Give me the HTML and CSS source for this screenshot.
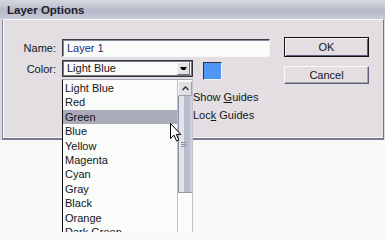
FILE: index.html
```html
<!DOCTYPE html>
<html>
<head>
<meta charset="utf-8">
<title>Layer Options</title>
<link rel="stylesheet" href="styles.css">
</head>
<body>
<div class="screen">
  <div class="window">
    <div class="titlebar">Layer Options</div>
    <div class="panel">
      <div class="form">
        <label class="lbl">Name:</label>
        <div class="textbox">Layer 1</div>
        <label class="lbl">Color:</label>
        <div class="colorrow">
          <div class="select">
            <span class="sel-text">Light Blue</span>
            <span class="drop"><svg width="7" height="3" viewBox="0 0 7 3"><polygon points="0,0 7,0 5,3 2,3" fill="#000"/></svg></span>
          </div>
          <div class="swatch"></div>
        </div>
        <div></div>
        <div class="checks">
          <div class="check"><span class="box"></span><span>Show <u>G</u>uides</span></div>
          <div class="check"><span class="box"></span><span>Loc<u>k</u> Guides</span></div>
        </div>
      </div>
      <div class="buttons">
        <div class="btn default">OK</div>
        <div class="btn">Cancel</div>
      </div>
    </div>
  </div>

  <div class="list">
    <div class="items">
      <div class="item">Light Blue</div>
      <div class="item">Red</div>
      <div class="item sel">Green</div>
      <div class="item">Blue</div>
      <div class="item">Yellow</div>
      <div class="item">Magenta</div>
      <div class="item">Cyan</div>
      <div class="item">Gray</div>
      <div class="item">Black</div>
      <div class="item">Orange</div>
      <div class="item">Dark Green</div>
    </div>
    <div class="scroll">
      <div class="up"><svg width="7" height="5" viewBox="0 0 7 5"><polyline points="0.5,4 3.5,1 6.5,4" fill="none" stroke="#303038" stroke-width="1.3"/></svg></div>
      <div class="thumb"><span class="grip"></span><span class="grip"></span><span class="grip"></span></div>
    </div>
  </div>

  <svg class="cursor" width="13" height="20" viewBox="0 0 13 20">
    <path d="M0.5 0.5 L0.5 15.5 L4 12.2 L6.6 18 L8.8 17 L6.3 11.4 L10.8 11.4 Z" fill="#fff" stroke="#000" stroke-width="1" stroke-linejoin="miter"/>
  </svg>
</div>
</body>
</html>
```

FILE: styles.css
```css
html, body {
  margin: 0;
  padding: 0;
}

body {
  background: #f8faf8;
  font-family: "Liberation Sans", Arial, sans-serif;
  font-size: 11px;
  color: #141418;
  width: 385px;
  height: 232px;
  overflow: hidden;
}

.screen {
  position: relative;
  width: 385px;
  height: 232px;
}

.window {
  height: 140px;
  display: flex;
  flex-direction: column;
  background: #d8d8e0;
}

.titlebar {
  height: 19px;
  box-sizing: border-box;
  padding-left: 7px;
  line-height: 20px;
  font-weight: bold;
  font-size: 11.5px;
  color: #1c1c2c;
  background: linear-gradient(#d6d8e0 0%, #c6c9d4 30%, #b4b8c9 55%, #c8ccd8 100%);
}

.panel {
  height: 121px;
  margin-left: 2px;
  margin-right: 1px;
  box-sizing: border-box;
  border-top: 1px solid #fafafa;
  border-left: 1px solid #8888a0;
  border-right: 1px solid #74748e;
  border-bottom: 2px solid #7a7a92;
  background: #e2dee2;
  box-shadow: inset 1px 0 0 #fafafa, inset 0 -1px 0 #f2f2f4;
  display: flex;
  padding: 17px 14px 0 0;
}

.form {
  width: 267px;
  margin-right: 14px;
  margin-top: 2px;
  display: grid;
  grid-template-columns: 53px 208px;
  column-gap: 6px;
  row-gap: 3px;
  align-content: start;
}

.lbl {
  text-align: right;
  line-height: 18px;
}

.textbox {
  height: 18px;
  box-sizing: border-box;
  border: 1px solid;
  border-color: #3a3a44 #f8f8f8 #f8f8f8 #3a3a44;
  box-shadow: inset 1px 1px 0 #86869a;
  background: #fafcfa;
  padding-left: 4px;
  line-height: 16px;
  color: #1c2a80;
}

.colorrow {
  display: flex;
  height: 20px;
}

.select {
  width: 131px;
  height: 17px;
  box-sizing: border-box;
  border: 1px solid #34343c;
  box-shadow: inset 1px 1px 0 #74747e, inset -1px -1px 0 #74747e;
  background: #fafcfa;
  display: flex;
  align-items: center;
  padding-left: 4px;
}

.sel-text {
  line-height: 15px;
}

.drop {
  margin-left: auto;
  margin-right: 2px;
  width: 13px;
  height: 13px;
  box-sizing: border-box;
  border: 1px solid;
  border-color: #fafafa #70708a #70708a #fafafa;
  background: #e4e0e4;
  display: flex;
  align-items: center;
  justify-content: center;
}

.drop svg {
  display: block;
}

.swatch {
  width: 19px;
  height: 18px;
  margin-left: 10px;
  margin-top: 2px;
  box-sizing: border-box;
  border: 1px solid;
  border-color: #303040 #f4f4f4 #f4f4f4 #303040;
  background: #5096f6;
}

.checks {
  grid-column: 2;
  padding-top: 7px;
  padding-left: 115px;
  display: flex;
  flex-direction: column;
  gap: 4px;
}

.check {
  display: flex;
  align-items: center;
  height: 14px;
}

.box {
  width: 13px;
  height: 13px;
  box-sizing: border-box;
  border: 1px solid #404050;
  background: #fafcfa;
  margin-right: 3px;
}

.buttons {
  width: 85px;
  display: flex;
  flex-direction: column;
  gap: 9px;
}

.btn {
  height: 18px;
  box-sizing: border-box;
  border: 1px solid;
  border-color: #fafafa #5e5e78 #5e5e78 #fafafa;
  box-shadow: inset -1px -1px 0 #a4a4b4;
  background: #e2dee2;
  text-align: center;
  line-height: 16px;
}

.btn.default {
  height: 20px;
  border: 1px solid #101014;
  box-shadow: inset 1px 1px 0 #fafafa, inset -1px -1px 0 #5e5e78;
  line-height: 18px;
}

.list {
  position: absolute;
  left: 62px;
  top: 79px;
  width: 131px;
  height: 170px;
  box-sizing: border-box;
  border-left: 1px solid #101010;
  border-top: 1px solid #a8a8b4;
  border-right: 1px solid #c4c4ce;
  background: #fafcfa;
  display: flex;
}

.items {
  flex: 1;
  padding-top: 1px;
}

.item {
  height: 14.4px;
  line-height: 14.4px;
  padding-left: 2px;
  white-space: nowrap;
}

.item.sel {
  background: #a9abb9;
}

.scroll {
  width: 15px;
  box-sizing: border-box;
  border-left: 1px solid #c0c0cc;
  padding-top: 1px;
  display: flex;
  flex-direction: column;
}

.up {
  height: 15px;
  box-sizing: border-box;
  background: #e2dee2;
  border: 1px solid;
  border-color: #f8f8f8 #a0a0b0 #a0a0b0 #f8f8f8;
  display: flex;
  align-items: center;
  justify-content: center;
}

.up svg {
  display: block;
}

.thumb {
  height: 97px;
  box-sizing: border-box;
  border-left: 1px solid #8c90a8;
  border-bottom: 1px solid #9a98a4;
  background: linear-gradient(to right, #e6e3e8 0, #e6e3e8 40%, #b6bece 40%, #b6bece 88%, #cfd0da 88%);
  display: flex;
  flex-direction: column;
  align-items: flex-start;
  gap: 1px;
  padding-top: 46px;
  padding-left: 2px;
}

.grip {
  display: block;
  width: 5px;
  height: 1px;
  background: #8890a8;
}

.cursor {
  position: absolute;
  left: 170px;
  top: 123px;
  display: block;
}
```
